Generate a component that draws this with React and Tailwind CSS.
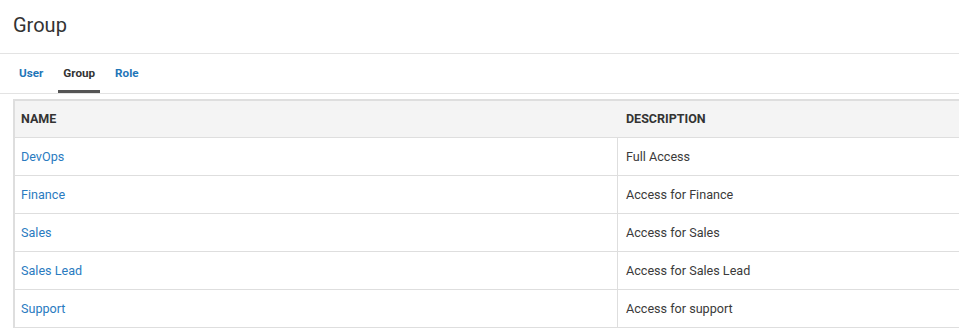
export default function App() {
  const rows = [
    ["DevOps", "Full Access"],
    ["Finance", "Access for Finance"],
    ["Sales", "Access for Sales"],
    ["Sales Lead", "Access for Sales Lead"],
    ["Support", "Access for support"],
  ];
  return (
    <div className="w-[959px] h-[334px] overflow-hidden bg-white text-[#333]" style={{ fontFamily: "Roboto, 'Liberation Sans', sans-serif" }}>
      <div className="h-[54px] border-b border-[#e3e3e3] flex items-center pl-[13px]">
        <h1 className="text-[20px] leading-none font-normal text-[#333] -mt-[4px]">Group</h1>
      </div>
      <div className="h-[40px] border-b border-[#e3e3e3] flex items-stretch pl-[14px] gap-[10px]">
        {["User", "Group", "Role"].map((t) => (
          <div
            key={t}
            className={
              "px-[5px] flex items-center text-[11.7px] font-bold border-b-[3px] " +
              (t === "Group" ? "border-[#555] text-[#333]" : "border-transparent text-[#1f76b8]")
            }
          >
            <span className="mt-[3px]">{t}</span>
          </div>
        ))}
      </div>
      <div className="pl-[13px] pt-[5px]">
        <div className="w-[1100px] border-t-2 border-l-2 border-[#dedede]">
          <div className="grid grid-cols-[603px_1fr] h-[37px] bg-[#f4f4f4] border-b border-[#dedede] text-[12.5px] font-bold text-[#333]">
            <div className="flex items-center pl-[6px] pt-[1px]">NAME</div>
            <div className="flex items-center pl-[8px] pt-[1px]">DESCRIPTION</div>
          </div>
          {rows.map(([n, d]) => (
            <div key={n} className="grid grid-cols-[603px_1fr] h-[38px] border-b border-[#dedede] text-[12.6px]">
              <div className="flex items-center pl-[6px] pt-[1px] text-[#2a7bbf] border-r border-[#dedede]">{n}</div>
              <div className="flex items-center pl-[8px] pt-[1px] text-[#3a3a3a]">{d}</div>
            </div>
          ))}
        </div>
      </div>
    </div>
  );
}
